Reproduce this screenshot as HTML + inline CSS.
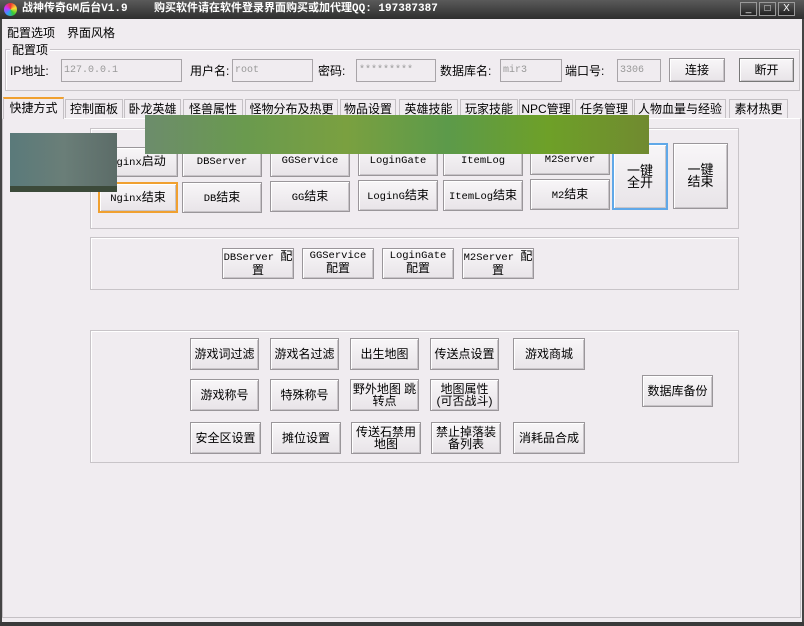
<!DOCTYPE html>
<html><head><meta charset="utf-8"><style>
*{box-sizing:border-box;margin:0;padding:0}
body{width:804px;height:626px;position:relative;overflow:hidden;background:#f0ecf0;font-family:"Liberation Sans","Noto Sans CJK SC",sans-serif;font-size:12px;color:#000}
.a{position:absolute}
.title{left:0;top:0;width:804px;height:19px;background:linear-gradient(#5a5a5a,#2e2e2e);color:#fff;font-weight:bold;font-size:12px;line-height:19px}
.wb{top:2px;width:17px;height:14px;border:1px solid #999;background:linear-gradient(#555,#222);color:#fff;font-size:10px;line-height:12px;text-align:center}
.btn{position:absolute;border:1px solid #9a969a;box-shadow:inset 1px 1px 0 #fff,inset -1px -1px 0 #c8c4c8;background:linear-gradient(#f8f6f8,#e8e4e8);display:flex;align-items:center;justify-content:center;text-align:center;font-size:10.5px;font-family:"Liberation Mono","Noto Sans CJK SC",monospace}
.btn>div{line-height:11px;white-space:nowrap}
.btn span.c{font-family:"Noto Sans CJK SC",sans-serif;font-size:12px}
.zh{font-family:"Liberation Sans","Noto Sans CJK SC",sans-serif;font-size:12px}
.zh>div{line-height:12px}
.inp{position:absolute;border:1px solid #a8a4a8;background:#f0ecf0;color:#999;font-family:"Liberation Mono",monospace;font-size:10px;line-height:22px;padding-left:2px;height:23px;top:59px}
.lbl{position:absolute;top:62px;font-size:12px}
.grp{position:absolute;border:1px solid #c8c4c8;box-shadow:1px 1px 0 #fff inset}
.tab{position:absolute;top:99px;height:19px;border:1px solid #c4c0c4;border-bottom:none;background:#f0ecf0;text-align:center;line-height:18px;font-size:12px;white-space:nowrap;overflow:hidden}
</style></head><body>
<div class="a title"><span style="position:absolute;left:4px;top:3px;width:13px;height:13px;border-radius:50%;background:conic-gradient(#e33,#fd3,#3c3,#39f,#c3f,#e33)"></span><span style="position:absolute;left:22px;font-family:'Liberation Mono','Noto Sans CJK SC',monospace;font-size:11px">战神传奇GM后台V1.9 &nbsp;&nbsp;&nbsp;购买软件请在软件登录界面购买或加代理QQ: 197387387</span></div>
<div class="a wb" style="left:740px">_</div><div class="a wb" style="left:759px">□</div><div class="a wb" style="left:778px">X</div>
<div class="a" style="left:0;top:19px;width:2px;height:607px;background:#444"></div>
<div class="a" style="right:0;top:19px;width:2px;height:607px;background:#444"></div>
<div class="a" style="left:0;top:622px;width:804px;height:4px;background:#3a3a3a"></div>
<div class="a" style="left:7px;top:24px">配置选项</div>
<div class="a" style="left:67px;top:24px">界面风格</div>
<div class="grp" style="left:5px;top:49px;width:795px;height:42px"></div>
<div class="a" style="left:10px;top:41px;background:#f0ecf0;padding:0 2px">配置项</div>
<div class="lbl" style="left:10px">IP地址:</div><div class="inp" style="left:61px;width:121px">127.0.0.1</div>
<div class="lbl" style="left:190px">用户名:</div><div class="inp" style="left:232px;width:81px">root</div>
<div class="lbl" style="left:318px">密码:</div><div class="inp" style="left:356px;width:80px">*********</div>
<div class="lbl" style="left:440px">数据库名:</div><div class="inp" style="left:500px;width:62px">mir3</div>
<div class="lbl" style="left:565px">端口号:</div><div class="inp" style="left:617px;width:44px">3306</div>
<div class="btn zh" style="left:669px;top:58px;width:56px;height:24px"><div>连接</div></div>
<div class="btn zh" style="left:739px;top:58px;width:55px;height:24px;border-color:#777"><div>断开</div></div>
<div class="a" style="left:2px;top:118px;width:799px;height:500px;border:1px solid #c4c0c4;border-top-color:#fff"></div>
<div class="tab" style="left:3px;top:97px;width:61px;height:22px;border-top:2px solid #f0a030">快捷方式</div>
<div class="tab" style="left:65px;width:58px">控制面板</div>
<div class="tab" style="left:124px;width:57px">卧龙英雄</div>
<div class="tab" style="left:183px;width:60px">怪兽属性</div>
<div class="tab" style="left:245px;width:93px">怪物分布及热更</div>
<div class="tab" style="left:340px;width:56px">物品设置</div>
<div class="tab" style="left:399px;width:59px">英雄技能</div>
<div class="tab" style="left:460px;width:58px">玩家技能</div>
<div class="tab" style="left:519px;width:54px">NPC管理</div>
<div class="tab" style="left:575px;width:58px">任务管理</div>
<div class="tab" style="left:634px;width:92px">人物血量与经验</div>
<div class="tab" style="left:729px;width:59px">素材热更</div>
<div class="grp" style="left:90px;top:128px;width:649px;height:101px"></div>
<div class="btn" style="left:98px;top:147px;width:80px;height:30px"><div>Nginx<span class="c">启动</span></div></div>
<div class="btn" style="left:182px;top:147px;width:80px;height:30px"><div>DBServer</div></div>
<div class="btn" style="left:270px;top:146px;width:80px;height:31px"><div>GGService</div></div>
<div class="btn" style="left:358px;top:146px;width:80px;height:30px"><div>LoginGate</div></div>
<div class="btn" style="left:443px;top:146px;width:80px;height:30px"><div>ItemLog</div></div>
<div class="btn" style="left:530px;top:145px;width:80px;height:30px"><div>M2Server</div></div>
<div class="btn" style="left:98px;top:182px;width:80px;height:31px;border:2px solid #f0a030"><div>Nginx<span class="c">结束</span></div></div>
<div class="btn" style="left:182px;top:182px;width:80px;height:31px"><div>DB<span class="c">结束</span></div></div>
<div class="btn" style="left:270px;top:181px;width:80px;height:31px"><div>GG<span class="c">结束</span></div></div>
<div class="btn" style="left:358px;top:180px;width:80px;height:31px"><div>LoginG<span class="c">结束</span></div></div>
<div class="btn" style="left:443px;top:180px;width:80px;height:31px"><div>ItemLog<span class="c">结束</span></div></div>
<div class="btn" style="left:530px;top:179px;width:80px;height:31px"><div>M2<span class="c">结束</span></div></div>
<div class="btn zh" style="left:612px;top:143px;width:56px;height:67px;border:2px solid #60a8e8;font-size:13px"><div>一键<br>全开</div></div>
<div class="btn zh" style="left:673px;top:143px;width:55px;height:66px;font-size:13px"><div>一键<br>结束</div></div>
<div class="a" style="left:145px;top:115px;width:504px;height:39px;background:linear-gradient(90deg,#6c8c6c,#6a9a4e,#7aa040,#5c9a4a,#6ea028,#708a30)"></div>
<div class="a" style="left:10px;top:133px;width:107px;height:59px;background:linear-gradient(90deg,#5a7a7a,#6a7e78,#5c6c68);border-bottom:6px solid #3c4a3a"></div>
<div class="grp" style="left:90px;top:237px;width:649px;height:53px"></div>
<div class="btn" style="left:222px;top:248px;width:72px;height:31px"><div>DBServer <span class="c">配</span><br><span class="c">置</span></div></div>
<div class="btn" style="left:302px;top:248px;width:72px;height:31px"><div>GGService<br><span class="c">配置</span></div></div>
<div class="btn" style="left:382px;top:248px;width:72px;height:31px"><div>LoginGate<br><span class="c">配置</span></div></div>
<div class="btn" style="left:462px;top:248px;width:72px;height:31px"><div>M2Server <span class="c">配</span><br><span class="c">置</span></div></div>
<div class="grp" style="left:90px;top:330px;width:649px;height:133px"></div>
<div class="btn zh" style="left:190px;top:338px;width:69px;height:32px"><div>游戏词过滤</div></div>
<div class="btn zh" style="left:270px;top:338px;width:69px;height:32px"><div>游戏名过滤</div></div>
<div class="btn zh" style="left:350px;top:338px;width:69px;height:32px"><div>出生地图</div></div>
<div class="btn zh" style="left:430px;top:338px;width:69px;height:32px"><div>传送点设置</div></div>
<div class="btn zh" style="left:513px;top:338px;width:72px;height:32px"><div>游戏商城</div></div>
<div class="btn zh" style="left:190px;top:379px;width:69px;height:32px"><div>游戏称号</div></div>
<div class="btn zh" style="left:270px;top:379px;width:69px;height:32px"><div>特殊称号</div></div>
<div class="btn zh" style="left:350px;top:379px;width:69px;height:32px"><div>野外地图 跳<br>转点</div></div>
<div class="btn zh" style="left:430px;top:379px;width:69px;height:32px"><div>地图属性<br>(可否战斗)</div></div>
<div class="btn zh" style="left:642px;top:375px;width:71px;height:32px"><div>数据库备份</div></div>
<div class="btn zh" style="left:190px;top:422px;width:71px;height:32px"><div>安全区设置</div></div>
<div class="btn zh" style="left:271px;top:422px;width:70px;height:32px"><div>摊位设置</div></div>
<div class="btn zh" style="left:351px;top:422px;width:70px;height:32px"><div>传送石禁用<br>地图</div></div>
<div class="btn zh" style="left:431px;top:422px;width:70px;height:32px"><div>禁止掉落装<br>备列表</div></div>
<div class="btn zh" style="left:513px;top:422px;width:72px;height:32px"><div>消耗品合成</div></div>
</body></html>
